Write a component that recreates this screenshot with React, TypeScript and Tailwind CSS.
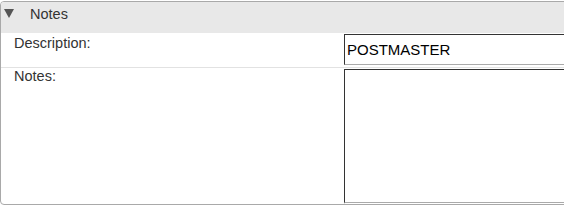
const font = { fontFamily: '"Liberation Sans", Arial, sans-serif' };

export default function App() {
  return (
    <div className="w-[564px] h-[208px] overflow-hidden bg-white" style={font}>
      <div className="mt-[1px] w-[620px] h-[204px] border border-[#a9a9a9] rounded-[4px] overflow-hidden flex flex-col">
        {/* Header */}
        <div className="h-[31px] shrink-0 bg-[#e8e8e8] flex items-start">
          <svg width="10" height="9" viewBox="0 0 10 9" className="ml-[3px] mt-[7px]">
            <polygon points="0,0 10,0 5,9" fill="#555" />
          </svg>
          <span className="ml-[16px] mt-[4px] text-[14.5px] text-[#333] leading-[16px]">Notes</span>
        </div>

        {/* Description row */}
        <div className="flex h-[35px] shrink-0 border-b border-[#e2e2e2]">
          <div className="w-[343px] shrink-0 pl-[13px] pt-[2px] text-[14.5px] text-[#333] leading-[17px]">
            Description:
          </div>
          <div className="pt-[1px]">
            <input
              readOnly
              value="POSTMASTER"
              className="w-[260px] h-[31px] px-[2px] text-[15px] text-black outline-none border border-t-[#333] border-l-[#333] border-b-[#aaa] border-r-[#aaa]"
              style={font}
            />
          </div>
        </div>

        {/* Notes row */}
        <div className="flex flex-1">
          <div className="w-[343px] shrink-0 pl-[13px] text-[14.5px] text-[#333] leading-[17px]">
            Notes:
          </div>
          <div className="pt-[1px] flex flex-col">
            <textarea
              readOnly
              className="w-[260px] h-[134px] resize-none outline-none border border-t-[#333] border-l-[#333] border-b-[#aaa] border-r-[#aaa]"
            />
            <div className="flex-1 border-l border-[#e2e2e2]" />
          </div>
        </div>
      </div>
    </div>
  );
}
